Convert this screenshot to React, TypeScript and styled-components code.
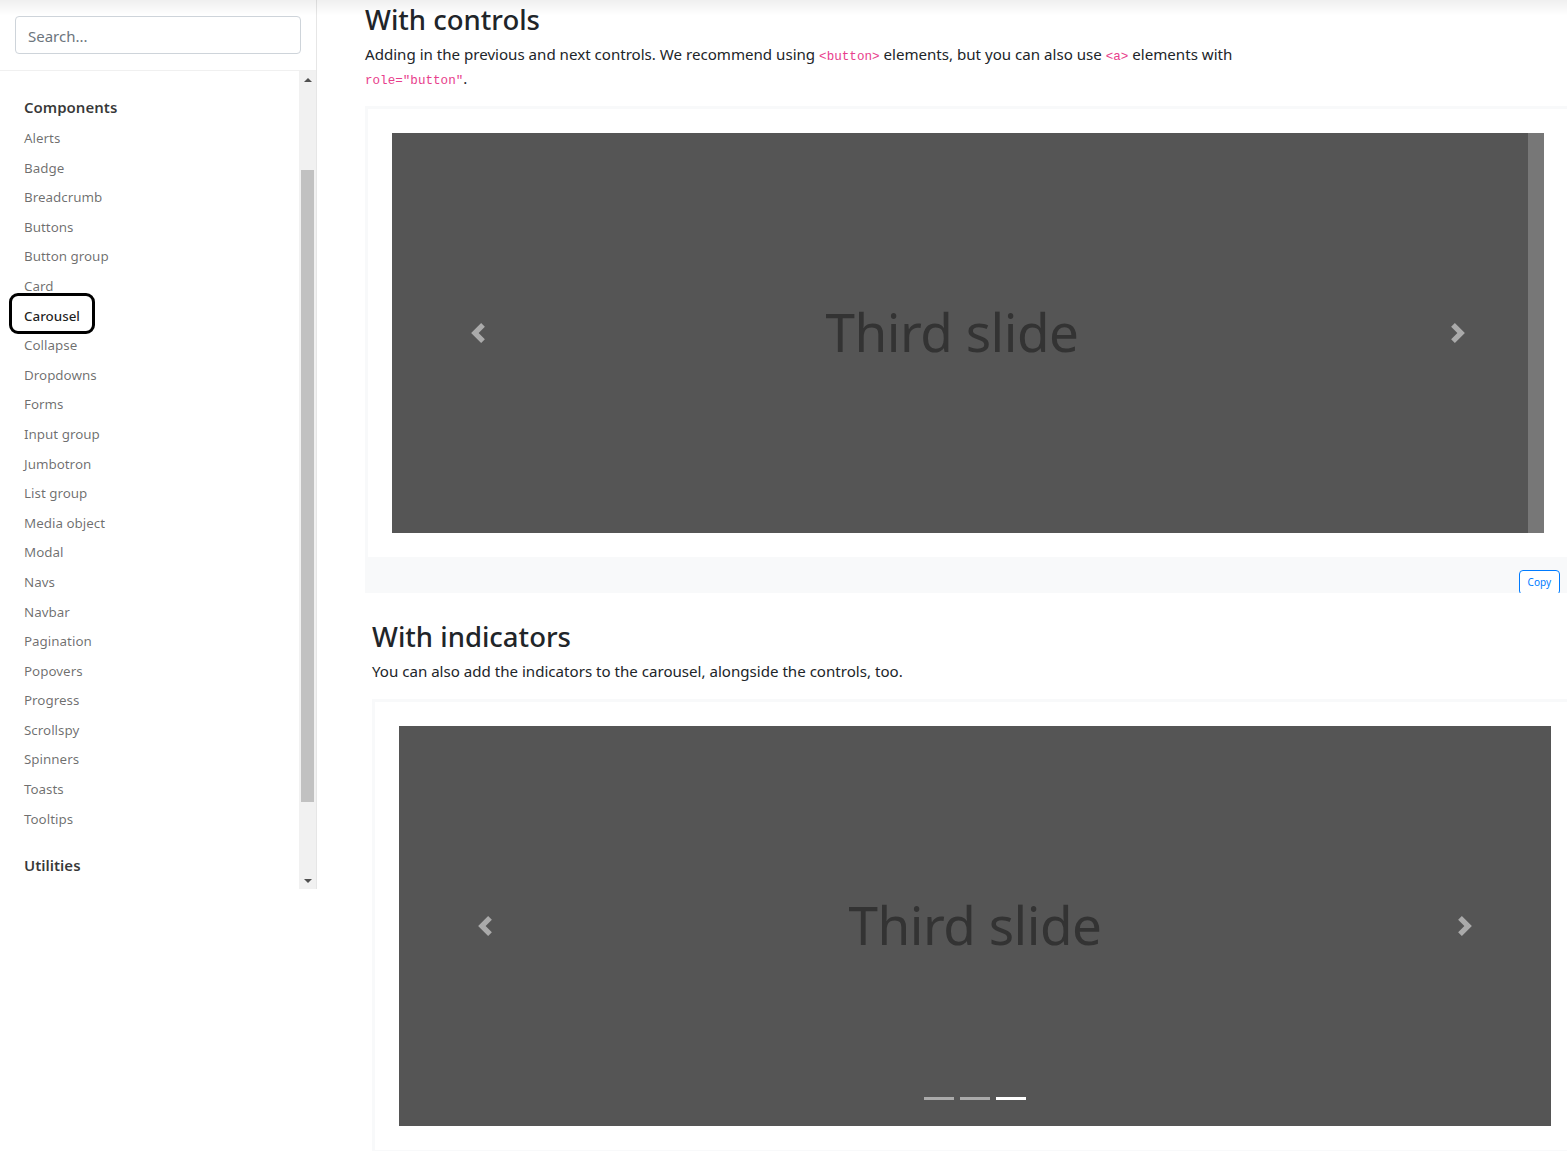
import React from "react";
import styled, { createGlobalStyle } from "styled-components";

const GlobalStyle = createGlobalStyle`
  html, body {
    margin: 0;
    padding: 0;
    overflow: hidden;
    background: #fff;
  }
  body {
    font-family: "Noto Sans", "Segoe UI", "Liberation Sans", sans-serif;
    font-size: 16px;
    line-height: 1.5;
    color: #212529;
  }
  * {
    box-sizing: border-box;
  }
`;

const navItems = [
  "Alerts",
  "Badge",
  "Breadcrumb",
  "Buttons",
  "Button group",
  "Card",
  "Carousel",
  "Collapse",
  "Dropdowns",
  "Forms",
  "Input group",
  "Jumbotron",
  "List group",
  "Media object",
  "Modal",
  "Navs",
  "Navbar",
  "Pagination",
  "Popovers",
  "Progress",
  "Scrollspy",
  "Spinners",
  "Toasts",
  "Tooltips",
];

const TopShade = styled.div`
  position: fixed;
  top: 0;
  left: 0;
  right: 0;
  height: 16px;
  background: linear-gradient(rgba(0, 0, 0, 0.06), rgba(0, 0, 0, 0));
  pointer-events: none;
  z-index: 10;
`;

const Page = styled.div`
  display: flex;
  align-items: flex-start;
  width: 100%;
`;

const Sidebar = styled.aside`
  flex: 0 0 317px;
  height: 889px;
  display: flex;
  flex-direction: column;
  border-right: 1px solid #e6e6e6;
`;

const SearchBar = styled.div`
  padding: 16px 15px;
  border-bottom: 1px solid #f0f0f0;
`;

const SearchInput = styled.input`
  display: block;
  width: 100%;
  height: 38px;
  padding: 7px 12px 5px;
  font-family: inherit;
  font-size: 15px;
  color: #495057;
  border: 1px solid #ced4da;
  border-radius: 4px;
  outline: none;

  &::placeholder {
    color: #6c757d;
  }
`;

const NavArea = styled.div`
  flex: 1;
  display: flex;
  min-height: 0;
`;

const NavList = styled.nav`
  flex: 1;
  padding-top: 20px;
`;

const TocItem = styled.div`
  margin-bottom: 15px;
`;

const TocLink = styled.div`
  padding: 4px 24px;
  font-size: 15px;
  font-weight: 600;
  line-height: 24px;
  color: rgba(0, 0, 0, 0.78);
`;

const SideNav = styled.div`
  display: flex;
  flex-direction: column;
  padding-top: 1px;
`;

const SideLink = styled.a<{ $active?: boolean }>`
  position: relative;
  align-self: flex-start;
  padding: 4px 24px;
  font-size: 13.4px;
  line-height: 21.6px;
  text-decoration: none;
  color: ${(p) => (p.$active ? "rgba(0, 0, 0, 0.88)" : "rgba(0, 0, 0, 0.58)")};
  font-weight: ${(p) => (p.$active ? 500 : 400)};

  ${(p) =>
    p.$active &&
    `
    &::after {
      content: "";
      box-sizing: border-box;
      position: absolute;
      left: 9px;
      top: -9px;
      width: 86px;
      height: 41px;
      border: 3px solid #000;
      border-radius: 9px;
    }
  `}
`;

const ScrollTrack = styled.div`
  flex: 0 0 17px;
  display: flex;
  flex-direction: column;
  background: #f1f1f1;
`;

const ScrollArrow = styled.div<{ $down?: boolean }>`
  height: 17px;
  display: flex;
  align-items: center;
  justify-content: center;

  &::before {
    content: "";
    border-left: 4px solid transparent;
    border-right: 4px solid transparent;
    ${(p) =>
      p.$down
        ? "border-top: 4px solid #505050;"
        : "border-bottom: 4px solid #505050;"}
  }
`;

const ScrollBody = styled.div`
  flex: 1;
  padding: 82px 2px 70px;
`;

const ScrollThumb = styled.div`
  height: 100%;
  background: #c1c1c1;
`;

const Main = styled.main`
  flex: 1;
  padding-left: 48px;
  min-width: 0;
`;

const Section = styled.section<{ $shift: number }>`
  margin-left: ${(p) => p.$shift}px;
  width: 1206px;

  & + & {
    margin-top: 27px;
  }
`;

const Heading = styled.h3`
  margin: 3px 0 6px;
  font-size: 27.5px;
  font-weight: 500;
  line-height: 1.2;
  color: #212529;
`;

const Lead = styled.p`
  margin: 0 0 16px;
  font-size: 15.1px;
  line-height: 24px;
  max-width: 880px;
`;

const Code = styled.code`
  font-family: "Liberation Mono", "DejaVu Sans Mono", monospace;
  font-size: 12.6px;
  line-height: 0;
  color: #e83e8c;
`;

const Example = styled.div`
  border: 3px solid #f8f9fa;
  padding: 24px;
`;

const Carousel = styled.div`
  position: relative;
  width: 1152px;
  height: 400px;
  overflow: hidden;
  display: flex;
  background: #555;
`;

const Slide = styled.div<{ $shift: number }>`
  flex: 0 0 1152px;
  margin-left: ${(p) => -p.$shift}px;
  display: flex;
  align-items: center;
  justify-content: center;
  background: #555;
`;

const NextSlide = styled.div`
  flex: 0 0 1152px;
  background: #777;
`;

const SlideLabel = styled.span`
  font-family: "Noto Sans", "Segoe UI", sans-serif;
  font-size: 53px;
  line-height: 1;
  color: #333;
  letter-spacing: -0.5px;
  margin-top: -4px;
`;

const Control = styled.div<{ $side: "left" | "right" }>`
  position: absolute;
  top: 0;
  bottom: 0;
  ${(p) => p.$side}: 0;
  width: 15%;
  display: flex;
  align-items: center;
  justify-content: center;
  opacity: 0.5;
`;

const Indicators = styled.ol`
  position: absolute;
  left: 0;
  right: 0;
  bottom: 0;
  margin: 0 0 16px;
  padding: 0;
  list-style: none;
  display: flex;
  justify-content: center;
`;

const Indicator = styled.li<{ $active?: boolean }>`
  width: 30px;
  height: 3px;
  margin: 10px 3px;
  background: #fff;
  opacity: ${(p) => (p.$active ? 1 : 0.5)};
`;

const Highlight = styled.div`
  position: relative;
  height: 36px;
  margin-top: -3px;
  background: #f8f9fa;
  overflow: hidden;
`;

const CopyButton = styled.button`
  position: absolute;
  top: 13px;
  right: 11px;
  padding: 4px 8px;
  font-family: inherit;
  font-size: 10px;
  line-height: 1.5;
  color: #007bff;
  background: #fff;
  border: 1px solid #007bff;
  border-radius: 4px;
`;

function Chevron({ dir }: { dir: "prev" | "next" }) {
  const d =
    dir === "prev"
      ? "M5.25 0l-4 4 4 4 1.5-1.5L4.25 4l2.5-2.5L5.25 0z"
      : "M2.75 0l-1.5 1.5L3.75 4l-2.5 2.5L2.75 8l4-4-4-4z";
  return (
    <svg width="20" height="20" viewBox="0 0 8 8">
      <path fill="#fff" d={d} />
    </svg>
  );
}

function CarouselDemo({
  shift,
  indicators,
}: {
  shift: number;
  indicators?: boolean;
}) {
  return (
    <Carousel>
      <Slide $shift={shift}>
        <SlideLabel>Third slide</SlideLabel>
      </Slide>
      {shift > 0 && <NextSlide />}
      {indicators && (
        <Indicators>
          <Indicator />
          <Indicator />
          <Indicator $active />
        </Indicators>
      )}
      <Control $side="left">
        <Chevron dir="prev" />
      </Control>
      <Control $side="right">
        <Chevron dir="next" />
      </Control>
    </Carousel>
  );
}

export default function App() {
  return (
    <>
      <GlobalStyle />
      <TopShade />
      <Page>
        <Sidebar>
          <SearchBar>
            <SearchInput type="search" placeholder="Search..." />
          </SearchBar>
          <NavArea>
            <NavList>
              <TocItem>
                <TocLink>Components</TocLink>
                <SideNav>
                  {navItems.map((item) => (
                    <SideLink key={item} $active={item === "Carousel"}>
                      {item}
                    </SideLink>
                  ))}
                </SideNav>
              </TocItem>
              <TocItem>
                <TocLink>Utilities</TocLink>
              </TocItem>
            </NavList>
            <ScrollTrack>
              <ScrollArrow />
              <ScrollBody>
                <ScrollThumb />
              </ScrollBody>
              <ScrollArrow $down />
            </ScrollTrack>
          </NavArea>
        </Sidebar>

        <Main>
          <Section $shift={0}>
            <Heading>With controls</Heading>
            <Lead>
              Adding in the previous and next controls. We recommend using{" "}
              <Code>&lt;button&gt;</Code> elements, but you can also use{" "}
              <Code>&lt;a&gt;</Code> elements with <Code>role="button"</Code>.
            </Lead>
            <Example>
              <CarouselDemo shift={16} />
            </Example>
            <Highlight>
              <CopyButton>Copy</CopyButton>
            </Highlight>
          </Section>

          <Section $shift={7}>
            <Heading>With indicators</Heading>
            <Lead>
              You can also add the indicators to the carousel, alongside the
              controls, too.
            </Lead>
            <Example>
              <CarouselDemo shift={0} indicators />
            </Example>
          </Section>
        </Main>
      </Page>
    </>
  );
}
